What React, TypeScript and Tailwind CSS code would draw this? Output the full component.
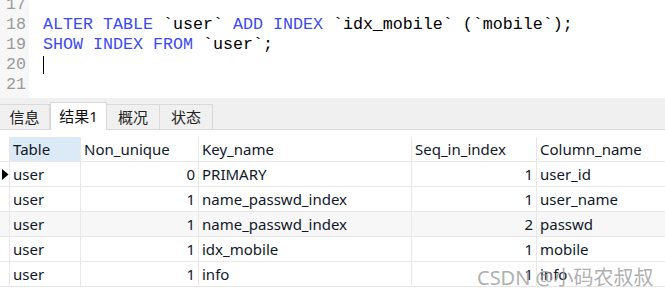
const code = [
  { n: 17, parts: [] as [string, boolean][] },
  {
    n: 18,
    parts: [
      ['ALTER TABLE ', true],
      ['`user` ', false],
      ['ADD INDEX ', true],
      ['`idx_mobile` (`mobile`);', false],
    ] as [string, boolean][],
  },
  { n: 19, parts: [['SHOW INDEX FROM ', true], ['`user`;', false]] as [string, boolean][] },
  { n: 20, parts: [] as [string, boolean][], cursor: true },
  { n: 21, parts: [] as [string, boolean][] },
];

const rows = [
  ['user', '0', 'PRIMARY', '1', 'user_id'],
  ['user', '1', 'name_passwd_index', '1', 'user_name'],
  ['user', '1', 'name_passwd_index', '2', 'passwd'],
  ['user', '1', 'idx_mobile', '1', 'mobile'],
  ['user', '1', 'info', '1', 'info'],
];

const cols = 'grid grid-cols-[10px_71px_118px_213px_125px_1fr]';

function Editor() {
  return (
    <div className="h-[98px] overflow-hidden bg-white flex">
      <div className="w-[29px] bg-[#f7f7f7] -mt-[5px] shrink-0">
        {code.map((l) => (
          <div key={l.n} className="h-5 leading-5 text-right pr-[3px] text-[#9a9a9a] font-['Liberation_Mono',monospace] text-[16.67px]">
            {l.n}
          </div>
        ))}
      </div>
      <div className="-mt-[5px] pl-[14px] font-['Liberation_Mono',monospace] text-[16.67px]">
        {code.map((l) => (
          <div key={l.n} className="h-5 leading-5 whitespace-pre flex items-center">
            {l.parts.map(([t, kw], i) => (
              <span key={i} className={kw ? 'text-[#3a4af2]' : 'text-black'}>{t}</span>
            ))}
            {l.cursor && <span className="w-px h-[18px] bg-black" />}
          </div>
        ))}
      </div>
    </div>
  );
}

function Tabs() {
  const tab = 'h-[25px] border border-b-0 border-[#d9d9d9] flex items-center justify-center text-[15px] text-[#222]';
  return (
    <div className="h-[32px] bg-[#f0f0f0] flex items-end border-b border-[#d9d9d9]">
      <div className={`${tab} w-[50px] border-l-0`}>信息</div>
      <div className="h-[28px] w-[57px] -mb-px bg-white border border-b-0 border-[#d9d9d9] flex items-center justify-center text-[15px] text-[#111]">
        结果1
      </div>
      <div className={`${tab} w-[53px] border-l-0`}>概况</div>
      <div className={`${tab} w-[53px] border-l-0`}>状态</div>
    </div>
  );
}

function Grid() {
  const cell = 'h-[25px] border-r border-b border-[#e8e8e8] flex items-center px-[3px] pt-px text-[15px] text-[#10182a] whitespace-nowrap overflow-hidden';
  const heads = ['Table', 'Non_unique', 'Key_name', 'Seq_in_index', 'Column_name'];
  return (
    <div className="pt-[7px] bg-white">
      <div className={cols}>
        <div className="h-[25px] border-r border-b border-[#e8e8e8]" />
        {heads.map((h, i) => (
          <div key={h} className={`${cell} ${i === 0 ? 'bg-[#dce9f6]' : ''} ${i === 4 ? 'border-r-0' : ''}`}>
            {h}
          </div>
        ))}
      </div>
      {rows.map((r, ri) => (
        <div key={ri} className={`${cols} ${ri === 2 ? 'bg-[#f7f7f7]' : ''}`}>
          <div className="h-[25px] border-r border-b border-[#e8e8e8] flex items-center">
            {ri === 0 && (
              <svg width="7" height="11" viewBox="0 0 7 11" className="ml-[2px] mt-px">
                <path d="M0 0 L6.5 5.5 L0 11 Z" fill="#000" />
              </svg>
            )}
          </div>
          {r.map((v, i) => (
            <div
              key={i}
              className={`${cell} ${i === 1 || i === 3 ? 'justify-end' : ''} ${i === 4 ? 'border-r-0' : ''}`}
            >
              {v}
            </div>
          ))}
        </div>
      ))}
    </div>
  );
}

export default function App() {
  return (
    <div className="relative w-[665px] h-[299px] overflow-hidden bg-white font-['Noto_Sans','Noto_Sans_CJK_SC',sans-serif]">
      <Editor />
      <Tabs />
      <Grid />
      <div className="absolute left-[477px] top-[264px] leading-[28px] text-[20px] text-[#9a9a9a]/80 font-['Noto_Sans','Noto_Sans_CJK_SC',sans-serif] whitespace-nowrap">
        CSDN @小码农叔叔
      </div>
    </div>
  );
}
